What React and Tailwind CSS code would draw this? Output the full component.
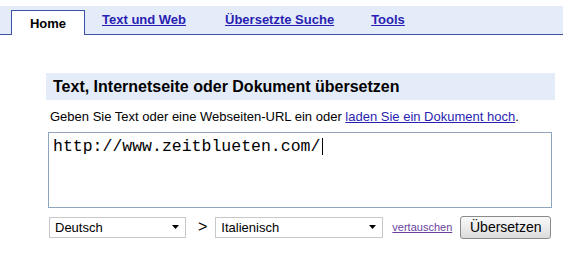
import React from 'react';

const Arrow = () => (
  <svg width="7" height="4" viewBox="0 0 7 4" className="shrink-0">
    <path d="M0 0 H7 L3.5 4 Z" fill="#000" />
  </svg>
);

const Select = ({ label, width }) => (
  <div className={`flex items-center justify-between h-[21px] border border-[#c8c8c8] bg-white pl-[5px] pr-[6px] ${width}`}>
    <span className="text-[13px] leading-none text-black">{label}</span>
    <Arrow />
  </div>
);

const App = () => {
  return (
    <div className="w-[568px] h-[258px] bg-white overflow-hidden" style={{ fontFamily: '"Liberation Sans", Arial, sans-serif' }}>
      {/* Tabs */}
      <div className="mt-[6px] mr-[5px] h-[29px] bg-[#e5ecf9] border-b border-[#3a54a8] flex items-end pl-[11px]">
        <div className="-mb-px h-[25px] w-[74px] bg-white border border-b-0 border-[#3a54a8] flex items-center justify-center pt-[2px] text-[13px] font-bold text-black">
          Home
        </div>
        <a className="ml-[17px] mb-[5px] text-[13px] font-bold text-[#2a1fb3] underline">Text und Web</a>
        <a className="ml-[39px] mb-[5px] text-[13px] font-bold text-[#2a1fb3] underline">Übersetzte Suche</a>
        <a className="ml-[37px] mb-[5px] text-[13px] font-bold text-[#2a1fb3] underline">Tools</a>
      </div>

      {/* Translate box */}
      <div className="mt-[38px] ml-[46px] w-[509px]">
        <div className="h-[27px] bg-[#e5ecf9] pl-[7px] flex items-center text-[16px] font-bold text-black">
          Text, Internetseite oder Dokument übersetzen
        </div>
        <p className="mt-[9px] pl-[4px] text-[13px] leading-[15px] text-black">
          Geben Sie Text oder eine Webseiten-URL ein oder{' '}
          <a className="text-[#2a1fb3] underline">laden Sie ein Dokument hoch</a>.
        </p>
        <div className="mt-[8px] ml-[2px] w-[504px] h-[76px] border border-[#8fa5bd] pl-[4px] pt-[1px]">
          <span className="text-[16.5px] leading-[20px] text-black" style={{ fontFamily: '"Liberation Mono", "Courier New", monospace' }}>
            http://www.zeitblueten.com/
          </span>
          <span className="inline-block w-px h-[17px] bg-black align-middle ml-[2px]" />
        </div>
        <div className="mt-[7px] ml-[3px] flex items-center">
          <Select label="Deutsch" width="w-[137px]" />
          <span className="ml-[12px] text-[16px] text-black">&gt;</span>
          <div className="ml-[8px]">
            <Select label="Italienisch" width="w-[168px]" />
          </div>
          <a className="ml-[9px] text-[11px] text-[#6b3fa0] underline">vertauschen</a>
          <button className="ml-[8px] h-[23px] w-[91px] rounded-[3px] border border-[#8a8a8a] bg-gradient-to-b from-[#fafafa] to-[#dcdcdc] text-[14px] text-black">
            Übersetzen
          </button>
        </div>
      </div>
    </div>
  );
};

export default App;
